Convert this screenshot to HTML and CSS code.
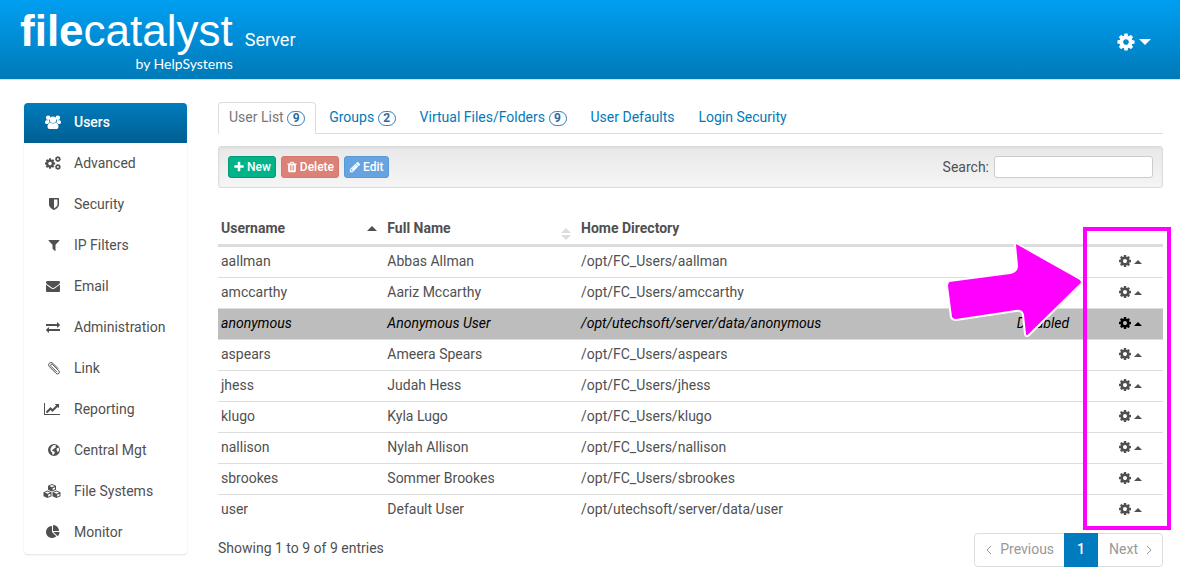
FILE: index.html
```
<!DOCTYPE html>
<html lang="en">
<head>
    <meta charset="UTF-8">
    <meta name="viewport" content="width=device-width, initial-scale=1.0">
    <title>FileCatalyst Server - Users</title>
    <link rel="stylesheet" href="styles.css">
</head>
<body>
    <!-- Icon set -->
    <svg class="sprite" aria-hidden="true">
        <symbol id="i-cog" viewBox="0 0 1792 1792"><path d="M1152 896q0-106-75-181t-181-75-181 75-75 181 75 181 181 75 181-75 75-181zm512-109v222q0 12-8 23t-20 13l-185 28q-19 54-39 91 35 50 107 138 10 12 10 25t-9 23q-27 37-99 108t-94 71q-12 0-26-9l-138-108q-44 23-91 38-16 136-29 186-7 28-36 28h-222q-14 0-24.500-8.500t-11.500-21.500l-28-184q-49-16-90-37l-141 107q-10 9-25 9-14 0-25-11-126-114-165-168-7-10-7-23 0-12 8-23 15-21 51-66.500t54-70.500q-27-50-41-99l-183-27q-13-2-21-12.500t-8-23.500v-222q0-12 8-23t19-13l186-28q14-46 39-92-40-57-107-138-10-12-10-24 0-10 9-23 26-36 98.500-107.500t94.500-71.500q13 0 26 10l138 107q44-23 91-38 16-136 29-186 7-28 36-28h222q14 0 24.500 8.500t11.500 21.500l28 184q49 16 90 37l142-107q9-9 24-9 13 0 25 10 129 119 165 170 7 8 7 22 0 12-8 23-15 21-51 66.500t-54 70.500q26 50 41 98l183 28q13 2 21 12.500t8 23.500z"/></symbol>
        <symbol id="i-users" viewBox="0 0 16 14"><circle cx="3.200" cy="2.800" r="2.300"/><circle cx="12.800" cy="2.800" r="2.300"/><path d="M1 5.200q-1 .6-1 2.400 0 1.400 1.200 1.400h1.600q.8-1.400 2-1.700-1-1.200-.8-2.500-1.500.8-3 .4zM15 5.200q1 .6 1 2.400 0 1.400-1.200 1.400h-1.600q-.8-1.400-2-1.700 1-1.200.8-2.500 1.500.8 3 .4z"/><circle cx="8" cy="4.700" r="3.200"/><path d="M5.300 7.600q-2.800.6-2.800 4.400 0 2 2 2h7q2 0 2-2 0-3.800-2.800-4.400-2.700 1.900-5.400 0z"/></symbol>
        <symbol id="i-cogs" viewBox="0 0 16 14"><use href="#i-cog" x="-1" y="1.500" width="12" height="12"/><use href="#i-cog" x="9.400" y="-.4" width="7" height="7"/><use href="#i-cog" x="9.400" y="7.400" width="7" height="7"/></symbol>
        <symbol id="i-shield" viewBox="0 0 1792 1792"><path d="M1344 960v-640h-448v1137q119-63 213-137 235-184 235-360zm192-768v768q0 86-33.500 170.500t-83 150-118 127.500-126.500 103-121 77.500-89.500 49.500-42.500 20q-12 6-26 6t-26-6q-16-7-42.500-20t-89.500-49.500-121-77.500-126.500-103-118-127.500-83-150-33.500-170.500v-768q0-26 19-45t45-19h1152q26 0 45 19t19 45z"/></symbol>
        <symbol id="i-filter" viewBox="0 0 1792 1792"><path d="M1595 295q17 41-14 70l-493 493v742q0 42-39 59-13 5-25 5-27 0-45-19l-256-256q-19-19-19-45v-486l-493-493q-31-29-14-70 17-39 59-39h1280q42 0 59 39z"/></symbol>
        <symbol id="i-envelope" viewBox="0 0 1792 1792"><path d="M1792 710v794q0 66-47 113t-113 47h-1472q-66 0-113-47t-47-113v-794q44 49 101 87 362 246 497 345 57 42 92.500 65.500t94.500 48 110 24.500h2q51 0 110-24.500t94.500-48 92.500-65.500q170-123 498-345 57-39 100-87zm0-294q0 79-49 151t-122 123q-376 261-468 325-10 7-42.500 31t-54 38.500-52 32.500-57.500 27-50 9h-2q-23 0-50-9t-57.500-27-52-32.500-54-38.500-42.500-31q-91-64-262-182.500t-205-142.500q-62-42-117-115.500t-55-136.500q0-78 41.500-130t118.500-52h1472q65 0 112.500 47t47.500 113z"/></symbol>
        <symbol id="i-exchange" viewBox="0 0 1792 1792"><path d="M1792 1184v192q0 13-9.500 22.500t-22.500 9.500h-1376v192q0 13-9.500 22.500t-22.500 9.500q-12 0-24-10l-319-320q-9-9-9-22 0-14 9-23l320-320q9-9 23-9 13 0 22.500 9.500t9.500 22.500v192h1376q13 0 22.500 9.500t9.500 22.500zm0-544q0 14-9 23l-320 320q-9 9-23 9-13 0-22.500-9.500t-9.500-22.500v-192h-1376q-13 0-22.500-9.500t-9.500-22.500v-192q0-13 9.500-22.500t22.500-9.500h1376v-192q0-14 9-23t23-9q12 0 24 10l319 319q9 9 9 23z"/></symbol>
        <symbol id="i-clip" viewBox="0 0 14 14"><path d="M9.500 10.800L4 5.300q-.8-1 0-1.700t1.700 0l6 6q1.300 1.600.2 2.800t-2.800 0L2.300 5.600Q.8 3.700 2.300 2.200t3.500 0l5.200 5.200" fill="none" stroke="currentColor" stroke-width="1" stroke-linecap="round"/></symbol>
        <symbol id="i-chart" viewBox="0 0 2048 1792"><path d="M2048 1536v128h-2048v-1536h128v1408h1920zm-128-1248v435q0 21-19.500 29.500t-35.500-7.500l-121-121-633 633q-10 10-23 10t-23-10l-233-233-416 416-192-192 585-585q10-10 23-10t23 10l233 233 464-464-121-121q-16-16-7.500-35.500t29.500-19.500h435q14 0 23 9t9 23z"/></symbol>
        <symbol id="i-globe" viewBox="0 0 14 14"><path fill-rule="evenodd" d="M7 1a6 6 0 1 0 0 12A6 6 0 1 0 7 1zM6.200 2.200l2-.2 1 .9-1 .7.7.7-1 1-1.300.4-.6 1-1 .2.600 1 1.600.5.8 1-1 1.500-.8 1.100-.8-.4-.2-1.800-1.200-1.400-.6-1.600.4-1.800 1-1.500zM10 5.300l1.200-.8.8 1.200.2 1.600-1.100 1.800-.8-.3-.3-1.300-.6-.8z"/></symbol>
        <symbol id="i-cubes" viewBox="0 0 18 14"><path d="M9 0l4 1.700v4L9 7.500 5 5.700v-4zM4.500 6.500l4 1.700v4L4.500 14l-4-1.800v-4zM13.500 6.500l4 1.700v4l-4 1.800-4-1.800v-4z"/><g class="cube-face"><path d="M9 1l2.600 1.100L9 3.200 6.400 2.100zM4.500 7.500l2.600 1.100-2.600 1.100-2.600-1.100zM13.500 7.500l2.600 1.100-2.600 1.100-2.600-1.100z"/><path d="M9.600 4.200L12 3.200v1.900L9.600 6.200zM5.100 10.700l2.400-1v1.900l-2.400 1.100zM14.100 10.700l2.400-1v1.900l-2.400 1.100z"/></g></symbol>
        <symbol id="i-pie" viewBox="0 0 1792 1792"><path d="M768 890l546 546q-106 108-247.500 168t-298.500 60q-209 0-385.500-103t-279.500-279.500-103-385.500 103-385.500 279.500-279.500 385.500-103v762zm187 6h773q0 157-60 298.500t-168 247.500zm709-128h-768v-768q209 0 385.500 103t279.500 279.500 103 385.500z"/></symbol>
        <symbol id="i-plus" viewBox="0 0 1792 1792"><path d="M1600 736v192q0 40-28 68t-68 28h-416v416q0 40-28 68t-68 28h-192q-40 0-68-28t-28-68v-416h-416q-40 0-68-28t-28-68v-192q0-40 28-68t68-28h416v-416q0-40 28-68t68-28h192q40 0 68 28t28 68v416h416q40 0 68 28t28 68z"/></symbol>
        <symbol id="i-trash" viewBox="0 0 1792 1792"><path d="M704 1376v-704q0-14-9-23t-23-9h-64q-14 0-23 9t-9 23v704q0 14 9 23t23 9h64q14 0 23-9t9-23zm256 0v-704q0-14-9-23t-23-9h-64q-14 0-23 9t-9 23v704q0 14 9 23t23 9h64q14 0 23-9t9-23zm256 0v-704q0-14-9-23t-23-9h-64q-14 0-23 9t-9 23v704q0 14 9 23t23 9h64q14 0 23-9t9-23zm-544-992h448l-48-117q-7-9-17-11h-317q-10 2-17 11zm928 32v64q0 14-9 23t-23 9h-96v948q0 83-47 143.500t-113 60.500h-832q-66 0-113-58.500t-47-141.500v-952h-96q-14 0-23-9t-9-23v-64q0-14 9-23t23-9h309l70-167q15-37 54-63t79-26h320q40 0 79 26t54 63l70 167h309q14 0 23 9t9 23z"/></symbol>
        <symbol id="i-pencil" viewBox="0 0 1792 1792"><path d="M491 1536l91-91-235-235-91 91v107h128v128h107zm523-928q0-22-22-22-10 0-17 7l-542 542q-7 7-7 17 0 22 22 22 10 0 17-7l542-542q7-7 7-17zm-54-192l416 416-832 832h-416v-416zm683 96q0 53-37 90l-166 166-416-416 166-165q36-38 90-38 53 0 91 38l235 234q37 39 37 91z"/></symbol>
        <symbol id="i-up" viewBox="0 0 8 4"><path d="M0 4l4-4 4 4z"/></symbol>
        <symbol id="i-down" viewBox="0 0 12 6"><path d="M0 0h12L6 6z"/></symbol>
        <symbol id="i-sort" viewBox="0 0 10 12"><path d="M0 5l5-5 5 5zM0 7h10l-5 5z"/></symbol>
        <symbol id="i-left" viewBox="0 0 6 8"><path d="M5 0L1 4l4 4" fill="none" stroke="currentColor"/></symbol>
        <symbol id="i-right" viewBox="0 0 6 8"><path d="M1 0l4 4-4 4" fill="none" stroke="currentColor"/></symbol>
    </svg>

    <header class="topbar">
        <a class="brand" href="#">
            <span class="brand-name"><b>file</b>catalyst</span>
            <span class="brand-by">by HelpSystems</span>
        </a>
        <span class="product">Server</span>
        <button type="button" class="settings" aria-label="Settings">
            <svg class="settings-cog"><use href="#i-cog"/></svg>
            <svg class="settings-caret"><use href="#i-down"/></svg>
        </button>
    </header>

    <div class="layout">
        <nav class="sidebar">
            <a class="active" href="#"><span class="icon"><svg><use href="#i-users"/></svg></span>Users</a>
            <a href="#"><span class="icon"><svg><use href="#i-cogs"/></svg></span>Advanced</a>
            <a href="#"><span class="icon"><svg class="narrow"><use href="#i-shield"/></svg></span>Security</a>
            <a href="#"><span class="icon"><svg class="narrow"><use href="#i-filter"/></svg></span>IP Filters</a>
            <a href="#"><span class="icon"><svg><use href="#i-envelope"/></svg></span>Email</a>
            <a href="#"><span class="icon"><svg><use href="#i-exchange"/></svg></span>Administration</a>
            <a href="#"><span class="icon"><svg class="narrow"><use href="#i-clip"/></svg></span>Link</a>
            <a href="#"><span class="icon"><svg class="wide"><use href="#i-chart"/></svg></span>Reporting</a>
            <a href="#"><span class="icon"><svg class="narrow"><use href="#i-globe"/></svg></span>Central Mgt</a>
            <a href="#"><span class="icon"><svg class="wide"><use href="#i-cubes"/></svg></span>File Systems</a>
            <a href="#"><span class="icon"><svg><use href="#i-pie"/></svg></span>Monitor</a>
        </nav>

        <main class="content">
            <nav class="tabs">
                <a class="active" href="#">User List <span class="badge">9</span></a>
                <a href="#">Groups <span class="badge">2</span></a>
                <a href="#">Virtual Files/Folders <span class="badge">9</span></a>
                <a href="#">User Defaults</a>
                <a href="#">Login Security</a>
            </nav>

            <div class="toolbar">
                <button type="button" class="btn btn-new"><svg><use href="#i-plus"/></svg>New</button>
                <button type="button" class="btn btn-delete" disabled><svg><use href="#i-trash"/></svg>Delete</button>
                <button type="button" class="btn btn-edit" disabled><svg><use href="#i-pencil"/></svg>Edit</button>
                <label class="search-label" for="search">Search:</label>
                <input type="text" id="search" class="search">
            </div>

            <div class="table-area">
                <table class="users">
                    <thead>
                        <tr>
                            <th class="col-user"><span class="th-box">Username<svg class="sort-up"><use href="#i-up"/></svg></span></th>
                            <th class="col-name"><span class="th-box">Full Name<svg class="sort-both"><use href="#i-sort"/></svg></span></th>
                            <th class="col-home">Home Directory</th>
                            <th class="col-state"></th>
                            <th></th>
                        </tr>
                    </thead>
                    <tbody>
                        <tr><td>aallman</td><td>Abbas Allman</td><td>/opt/FC_Users/aallman</td><td></td><td class="actions"><button type="button" aria-label="Actions"><svg class="cog"><use href="#i-cog"/></svg><svg class="up"><use href="#i-up"/></svg></button></td></tr>
                        <tr><td>amccarthy</td><td>Aariz Mccarthy</td><td>/opt/FC_Users/amccarthy</td><td></td><td class="actions"><button type="button" aria-label="Actions"><svg class="cog"><use href="#i-cog"/></svg><svg class="up"><use href="#i-up"/></svg></button></td></tr>
                        <tr class="disabled"><td>anonymous</td><td>Anonymous User</td><td>/opt/utechsoft/server/data/anonymous</td><td>Disabled</td><td class="actions"><button type="button" aria-label="Actions"><svg class="cog"><use href="#i-cog"/></svg><svg class="up"><use href="#i-up"/></svg></button></td></tr>
                        <tr><td>aspears</td><td>Ameera Spears</td><td>/opt/FC_Users/aspears</td><td></td><td class="actions"><button type="button" aria-label="Actions"><svg class="cog"><use href="#i-cog"/></svg><svg class="up"><use href="#i-up"/></svg></button></td></tr>
                        <tr><td>jhess</td><td>Judah Hess</td><td>/opt/FC_Users/jhess</td><td></td><td class="actions"><button type="button" aria-label="Actions"><svg class="cog"><use href="#i-cog"/></svg><svg class="up"><use href="#i-up"/></svg></button></td></tr>
                        <tr><td>klugo</td><td>Kyla Lugo</td><td>/opt/FC_Users/klugo</td><td></td><td class="actions"><button type="button" aria-label="Actions"><svg class="cog"><use href="#i-cog"/></svg><svg class="up"><use href="#i-up"/></svg></button></td></tr>
                        <tr><td>nallison</td><td>Nylah Allison</td><td>/opt/FC_Users/nallison</td><td></td><td class="actions"><button type="button" aria-label="Actions"><svg class="cog"><use href="#i-cog"/></svg><svg class="up"><use href="#i-up"/></svg></button></td></tr>
                        <tr><td>sbrookes</td><td>Sommer Brookes</td><td>/opt/FC_Users/sbrookes</td><td></td><td class="actions"><button type="button" aria-label="Actions"><svg class="cog"><use href="#i-cog"/></svg><svg class="up"><use href="#i-up"/></svg></button></td></tr>
                        <tr><td>user</td><td>Default User</td><td>/opt/utechsoft/server/data/user</td><td></td><td class="actions"><button type="button" aria-label="Actions"><svg class="cog"><use href="#i-cog"/></svg><svg class="up"><use href="#i-up"/></svg></button></td></tr>
                    </tbody>
                </table>
                <!-- Callout over the actions column -->
                <div class="callout-box"></div>
                <svg class="callout-arrow" viewBox="0 0 140 96" aria-hidden="true"><path d="M5 40L66 32Q73 31 73 25L71 4Q71 1 74 3L136 38Q140 41 136 44L85 94Q82 97 81 93L79 74Q78 69 72 70L12 79Q8 79 7 76L3 45Q3 41 5 40z"/></svg>
            </div>

            <div class="table-footer">
                <span>Showing 1 to 9 of 9 entries</span>
                <div class="pagination">
                    <button type="button" disabled><svg><use href="#i-left"/></svg>Previous</button>
                    <button type="button" class="current">1</button>
                    <button type="button" disabled>Next<svg><use href="#i-right"/></svg></button>
                </div>
            </div>
        </main>
    </div>
</body>
</html>
```
FILE: styles.css
```
* {
    box-sizing: border-box;
}

body {
    margin: 0;
    font-family: Roboto, Arial, sans-serif;
    font-size: 14px;
    line-height: 20px;
    color: #505050;
    background: #fff;
}

a {
    color: #007bb8;
    text-decoration: none;
}

button,
input {
    font: inherit;
    color: inherit;
}

button {
    margin: 0;
    cursor: pointer;
}

svg {
    fill: currentColor;
    flex: none;
}

.sprite {
    display: none;
}

/* Header */
.topbar {
    display: flex;
    align-items: flex-start;
    height: 80px;
    padding: 7px 29px 0 20px;
    color: #fff;
    background: linear-gradient(#009ff2, #007ab8);
    border-bottom: 1px solid #cfe3e8;
}

.brand {
    display: flex;
    flex-direction: column;
    color: #fff;
}

.brand-name {
    font-family: "Liberation Sans", Arial, sans-serif;
    font-size: 44px;
    line-height: 48px;
}

.brand-name b {
    font-weight: 700;
}

.brand-by {
    font-family: Lato, sans-serif;
    font-size: 14px;
    line-height: 18px;
    text-align: right;
}

.product {
    margin: 23px 0 0 12px;
    font-size: 18px;
}

.settings {
    display: flex;
    align-items: center;
    gap: 3px;
    margin: 25px 0 0 auto;
    padding: 0;
    border: 0;
    background: none;
}

.settings-cog {
    width: 20px;
    height: 20px;
}

.settings-caret {
    width: 12px;
    height: 6px;
}

/* Page columns */
.layout {
    display: flex;
    align-items: flex-start;
    gap: 31px;
    padding: 22px 17px 16px 24px;
}

.sidebar {
    flex: none;
    display: flex;
    flex-direction: column;
    gap: 1px;
    width: 163px;
    margin-top: 1px;
    padding-bottom: 1px;
    border-radius: 4px;
    box-shadow: 0 1px 2px rgba(0, 0, 0, 0.12);
}

.sidebar a {
    display: flex;
    align-items: center;
    gap: 13px;
    height: 40px;
    padding: 0 10px 2px;
    color: #505050;
}

.sidebar a.active {
    color: #fff;
    font-weight: 500;
    background: linear-gradient(#007cbd, #005f91);
    border-radius: 4px 4px 0 0;
}

.icon {
    display: flex;
    justify-content: flex-end;
    width: 27px;
}

.icon svg {
    width: 16px;
    height: 14px;
}

.icon .narrow {
    width: 14px;
}

.icon .wide {
    width: 18px;
}

.cube-face {
    fill: #fff;
}

.content {
    flex: 1;
    min-width: 0;
}

/* Tabs */
.tabs {
    display: flex;
    gap: 2px;
    border-bottom: 1px solid #ddd;
}

.tabs a {
    height: 31px;
    padding: 4px 10px 0;
    border: 1px solid transparent;
    border-bottom: 0;
}

.tabs a.active {
    height: 32px;
    margin-bottom: -1px;
    color: #777;
    background: #fff;
    border-color: #ddd;
    border-radius: 4px 4px 0 0;
}

.badge {
    display: inline-block;
    width: 18px;
    height: 15px;
    border: 1px solid #337ab7;
    border-radius: 8px;
    font-size: 12px;
    font-weight: 700;
    line-height: 13px;
    text-align: center;
    color: #31699c;
}

/* Toolbar */
.toolbar {
    display: flex;
    align-items: center;
    gap: 5px;
    height: 42px;
    margin-top: 12px;
    padding: 0 9px;
    background: linear-gradient(#e8e8e8, #f5f5f5);
    border: 1px solid #dcdcdc;
    border-radius: 3px;
    box-shadow: inset 0 1px 3px rgba(0, 0, 0, 0.05);
}

.btn {
    display: flex;
    align-items: center;
    gap: 2px;
    height: 22px;
    padding: 0 4px;
    border: 1px solid;
    border-radius: 3px;
    font-size: 12px;
    font-weight: 500;
    color: #fff;
}

.btn svg {
    width: 12px;
    height: 12px;
}

.btn-new {
    background: #00b389;
    border-color: #009a76;
}

.btn-delete {
    background: #db8175;
    border-color: #d5776b;
}

.btn-edit {
    background: #66a3e0;
    border-color: #5a98d6;
}

.search-label {
    margin-left: auto;
}

.search {
    width: 159px;
    height: 22px;
    padding: 0 6px;
    background: #fff;
    border: 1px solid #ccc;
    border-radius: 3px;
}

/* Users table */
.table-area {
    position: relative;
    margin-top: 25px;
}

.users {
    width: 100%;
    table-layout: fixed;
    border-collapse: separate;
    border-spacing: 0;
}

.users th {
    padding: 5px 3px 6px;
    text-align: left;
    font-weight: 700;
    border-bottom: 3px solid #ddd;
}

.users td {
    height: 31px;
    padding: 4px 3px 6px;
    border-bottom: 1px solid #ddd;
}

.users tr:last-child td {
    height: 30px;
    border-bottom: 0;
}

.users .col-user {
    width: 17.6%;
}

.users .col-name {
    width: 20.5%;
}

.users .col-home {
    width: 46.1%;
}

.users .col-state {
    width: 8.9%;
}

.th-box {
    display: flex;
    align-items: center;
    justify-content: space-between;
    padding-right: 4px;
}

.sort-up {
    width: 10px;
    height: 5px;
}

.sort-both {
    width: 10px;
    height: 12px;
    margin: 6px 0 -6px;
    color: #ddd;
}

.users .disabled td {
    color: #000;
    font-style: italic;
    background: #bdbdbd;
}

.actions button {
    display: flex;
    align-items: center;
    gap: 2px;
    margin: 0 auto;
    padding: 0;
    border: 0;
    background: none;
}

.actions .cog {
    width: 14px;
    height: 14px;
}

.actions .up {
    width: 8px;
    height: 4px;
    margin-top: 2px;
}

.callout-box {
    position: absolute;
    top: 14px;
    right: -8px;
    bottom: -5px;
    width: 88px;
    border: 4px solid #f0f;
    pointer-events: none;
}

.callout-arrow {
    position: absolute;
    top: 28px;
    right: 79px;
    width: 140px;
    height: 96px;
    fill: #f0f;
    stroke: #fff;
    stroke-width: 2px;
    pointer-events: none;
}

/* Footer */
.table-footer {
    display: flex;
    align-items: flex-start;
    justify-content: space-between;
    margin-top: 8px;
}

.table-footer > span {
    margin-top: 5px;
}

.pagination {
    display: flex;
    height: 34px;
    border: 1px solid #ddd;
    border-radius: 4px;
}

.pagination button {
    display: flex;
    align-items: center;
    gap: 8px;
    height: 32px;
    padding: 0 10px 2px 11px;
    border: 0;
    color: #999;
    background: none;
}

.pagination svg {
    width: 6px;
    height: 8px;
    margin-top: 2px;
}

.pagination .current {
    height: 34px;
    margin-top: -1px;
    padding: 0 13px 2px;
    color: #fff;
    font-weight: 500;
    background: #007bbd;
}
```
